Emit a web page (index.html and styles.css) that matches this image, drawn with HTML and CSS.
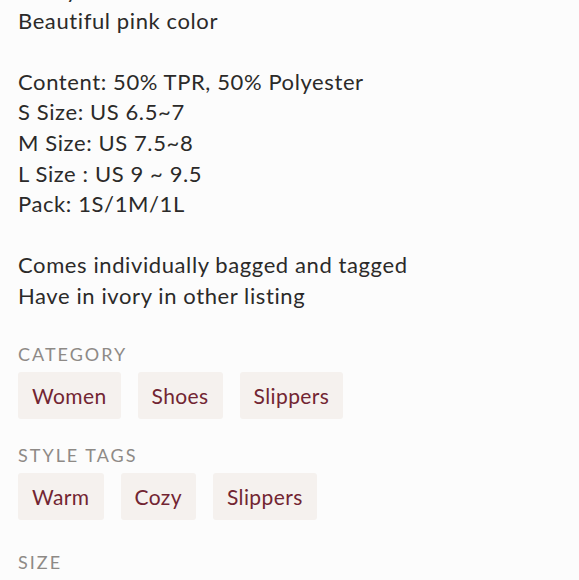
FILE: index.html
```html
<!DOCTYPE html>
<html>
<head>
<meta charset="utf-8">
<link rel="stylesheet" href="styles.css">
</head>
<body>
<div class="listing">
  <div class="description">
    <p>Fluffy</p>
    <p>Beautiful pink color</p>
    <p>&nbsp;</p>
    <p>Content: 50% TPR, 50% Polyester</p>
    <p>S Size: US 6.5~7</p>
    <p>M Size: US 7.5~8</p>
    <p>L Size : US 9 ~ 9.5</p>
    <p>Pack: 1S/1M/1L</p>
    <p>&nbsp;</p>
    <p>Comes individually bagged and tagged</p>
    <p>Have in ivory in other listing</p>
  </div>

  <section class="group">
    <h3 class="label">CATEGORY</h3>
    <div class="tags">
      <span class="tag">Women</span>
      <span class="tag">Shoes</span>
      <span class="tag">Slippers</span>
    </div>
  </section>

  <section class="group">
    <h3 class="label">STYLE TAGS</h3>
    <div class="tags">
      <span class="tag">Warm</span>
      <span class="tag">Cozy</span>
      <span class="tag">Slippers</span>
    </div>
  </section>

  <section class="group group-size">
    <h3 class="label">SIZE</h3>
  </section>
</div>
</body>
</html>
```

FILE: styles.css
```css
html, body {
  margin: 0;
  padding: 0;
  background: #fcfcfc;
}

body {
  font-family: "Lato", "Liberation Sans", sans-serif;
  color: #2b2a29;
  overflow: hidden;
}

.listing {
  padding: 0 18px;
}

.description {
  margin-top: -25px;
  font-size: 22px;
  line-height: 30.6px;
  letter-spacing: 0.6px;
}

.description p {
  margin: 0;
}

.group {
  margin-top: 32px;
}

.label {
  margin: 0;
  font-size: 18px;
  font-weight: 400;
  letter-spacing: 2px;
  color: #8e8a86;
  line-height: 20px;
}

.tags {
  display: flex;
  gap: 17px;
  margin-top: 8px;
}

.tag {
  display: inline-flex;
  align-items: center;
  height: 47px;
  padding: 0 14px;
  background: #f5f1ee;
  border-radius: 3px;
  color: #722532;
  font-size: 21px;
  letter-spacing: 0.4px;
  box-sizing: border-box;
}

.group + .group {
  margin-top: 26px;
}

.group-size {
  margin-top: 32px !important;
}
```
